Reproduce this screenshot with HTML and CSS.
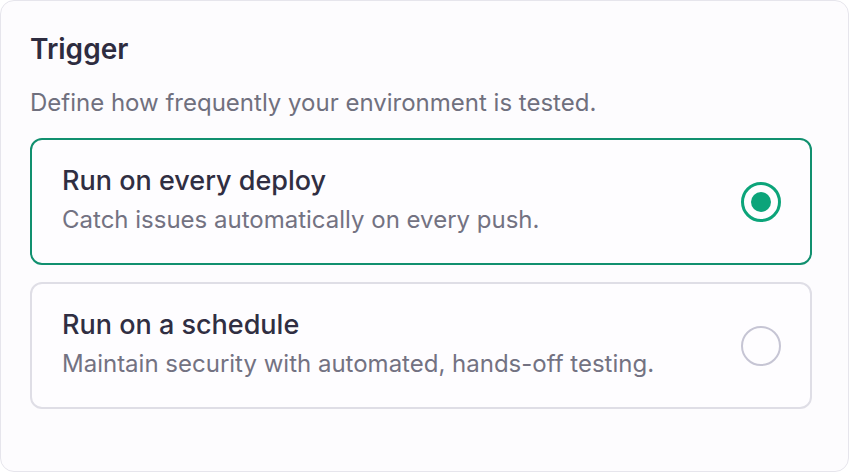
FILE: index.html
```html
<!DOCTYPE html>
<html>
<head>
<meta charset="utf-8">
<link rel="stylesheet" href="styles.css">
</head>
<body>
<div class="card">
  <h2 class="title">Trigger</h2>
  <p class="desc">Define how frequently your environment is tested.</p>
  <div class="options">
    <div class="option selected">
      <div class="text">
        <div class="opt-title">Run on every deploy</div>
        <div class="opt-sub">Catch issues automatically on every push.</div>
      </div>
      <span class="radio on"><span class="dot"></span></span>
    </div>
    <div class="option">
      <div class="text">
        <div class="opt-title">Run on a schedule</div>
        <div class="opt-sub">Maintain security with automated, hands-off testing.</div>
      </div>
      <span class="radio"></span>
    </div>
  </div>
</div>
</body>
</html>
```
FILE: styles.css
```css
html, body { margin: 0; padding: 0; background: #ffffff; }
body { font-family: Inter, "Noto Sans", sans-serif; }
.card {
  box-sizing: border-box;
  width: 849px;
  height: 472px;
  border: 1.5px solid #e6e5ec;
  border-radius: 14px;
  background: #fdfcfe;
  padding: 30px 36px 0 29px;
}
.title {
  margin: 0;
  font-size: 28px;
  font-weight: 600;
  color: #2e2c40;
  line-height: 36px;
}
.desc {
  margin: 21px 0 0;
  font-size: 24px;
  color: #70707e;
  line-height: 30px;
}
.options { margin-top: 20px; display: flex; flex-direction: column; gap: 17px; }
.option {
  box-sizing: border-box;
  height: 127px;
  border: 2px solid #dfdee6;
  border-radius: 12px;
  background: #fefdff;
  display: flex;
  align-items: center;
  justify-content: space-between;
  padding: 0 29px 0 30px;
}
.option.selected { border-color: #11906f; }
.text { margin-bottom: 5px; }
.opt-title { font-size: 27px; font-weight: 500; color: #302e42; line-height: 34px; }
.opt-sub { margin-top: 8px; font-size: 24px; color: #737282; line-height: 28px; }
.radio {
  box-sizing: border-box;
  width: 40px; height: 40px;
  border-radius: 50%;
  border: 2.5px solid #c6c5d4;
  display: flex; align-items: center; justify-content: center;
}
.radio.on { border: 3px solid #0ca47a; }
.dot { width: 20px; height: 20px; border-radius: 50%; background: #0ca47a; }
```
